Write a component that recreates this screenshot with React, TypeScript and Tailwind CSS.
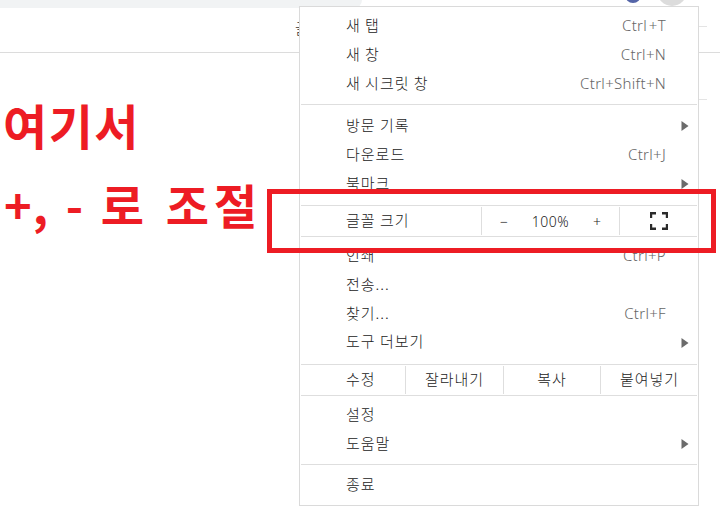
const font = "font-['Noto_Sans_CJK_KR',sans-serif]";

function Row({ label, hint, arrow, h = "h-[29px]" }: { label: string; hint?: string; arrow?: boolean; h?: string }) {
  return (
    <div className={`${h} flex items-center pl-[46px] pb-[3px] relative shrink-0`}>
      <span className="text-[15px] leading-none tracking-[1px] text-[#222] font-light">{label}</span>
      {hint && <span className="absolute right-[32px] top-[5px] font-['Noto_Sans',sans-serif] text-[15px] font-light leading-[18px] tracking-[0.3px] text-[#666]">{hint}</span>}
      {arrow && (
        <svg className="absolute right-[9px] top-[10px]" width="8" height="10" viewBox="0 0 8 10">
          <path d="M0.5 0 L7.5 5 L0.5 10 Z" fill="#6b6b6b" />
        </svg>
      )}
    </div>
  );
}

function Line({ m }: { m: string }) {
  return <div className={`h-px bg-[#dedede] mx-px shrink-0 ${m}`} />;
}

export default function App() {
  return (
    <div className={`relative w-[720px] h-[521px] overflow-hidden bg-white ${font}`}>
      {/* browser chrome behind the menu */}
      <div className="relative h-[53px] border-b border-[#dcdcdc]">
        <div className="w-[362px] h-[8px] bg-[#f1f3f4] rounded-br-[10px]" />
        <div className="absolute left-[625px] top-[-13px] w-[16px] h-[16px] rounded-full bg-[#5565a8]" />
        <div className="absolute left-[657px] top-[-24px] w-[30px] h-[30px] rounded-full bg-[#dcdcdc]" />
        <span className="absolute left-[295px] top-[18px] text-[15px] leading-[20px] font-light text-[#333]">글</span>
      </div>
      <div className="absolute left-[699px] top-[26px] w-[8px] h-px bg-[#e4e4e4]" />
      <div className="absolute left-[699px] top-[99px] w-[8px] h-px bg-[#e4e4e4]" />

      {/* annotation text */}
      <div className="pl-[3px] pt-[39px] text-[#ed1c24] font-bold whitespace-nowrap">
        <div className="text-[48px] leading-[64px] tracking-[1.5px]">여기서</div>
        <div className="text-[47px] leading-[56px] mt-[20px] ml-[1px]">
          <span className="tracking-[1px] [word-spacing:5px]">+, - </span>
          <span className="tracking-[5px] [word-spacing:1px]">로 조절</span>
        </div>
      </div>

      {/* menu */}
      <div className="absolute left-[299px] top-[6px] w-[400px] h-[500px] bg-white border border-[#dadada] pt-[4px] flex flex-col">
        <Row label="새 탭" hint="Ctrl&#8202;+T" />
        <Row label="새 창" hint="Ctrl+N" />
        <Row label="새 시크릿 창" hint="Ctrl+Shift+N" />
        <Line m="mt-[6px] mb-[6px]" />
        <Row label="방문 기록" arrow />
        <Row label="다운로드" hint="Ctrl+J" />
        <Row label="북마크" arrow />
        <Line m="mt-[7px]" />
        <div className="h-[30px] flex items-stretch shrink-0 py-[1px]">
          <div className="w-[182px] flex items-center pl-[46px] pb-[3px] border-r border-[#dedede]">
            <span className="text-[15px] leading-none tracking-[1px] text-[#222] font-light">글꼴 크기</span>
          </div>
          <div className="w-[138px] flex items-center justify-between pl-[18px] pr-[18px] border-r border-[#dedede] text-[14px] text-[#222] font-['Noto_Sans',sans-serif] font-light">
            <span>−</span>
            <span className="tracking-[0.5px]">100%</span>
            <span>+</span>
          </div>
          <div className="flex-1 flex items-center pl-[30px]">
            <svg width="18" height="18" viewBox="0 0 18 18" fill="none" stroke="#2b2b2b" strokeWidth="2.4">
              <path d="M1 6V1.2H6M12 1.2H17V6M1 12V16.8H6M12 16.8H17V12" />
            </svg>
          </div>
        </div>
        <Line m="mb-[4px]" />
        <Row label="인쇄" hint="Ctrl+P" />
        <Row label="전송..." />
        <Row label="찾기..." hint="Ctrl+F" />
        <Row label="도구 더보기" arrow h="h-[28px]" />
        <Line m="mt-[8px]" />
        <div className="h-[30px] flex items-stretch shrink-0 py-[1px] text-[15px] leading-none tracking-[1px] text-[#222] font-light">
          <div className="w-[106px] flex items-center pl-[46px] pb-[3px] border-r border-[#dedede]">수정</div>
          <div className="w-[98px] flex items-center justify-center pb-[3px] border-r border-[#dedede]">잘라내기</div>
          <div className="w-[97px] flex items-center justify-center pb-[3px] border-r border-[#dedede]">복사</div>
          <div className="flex-1 flex items-center justify-center pb-[3px]">붙여넣기</div>
        </div>
        <Line m="mb-[4px]" />
        <Row label="설정" />
        <Row label="도움말" arrow />
        <Line m="mt-[6px] mb-[5px]" />
        <Row label="종료" />
      </div>

      {/* red highlight */}
      <div className="absolute left-[267px] top-[189px] w-[449px] h-[64px] border-[5px] border-[#ed1c24]" />
    </div>
  );
}
